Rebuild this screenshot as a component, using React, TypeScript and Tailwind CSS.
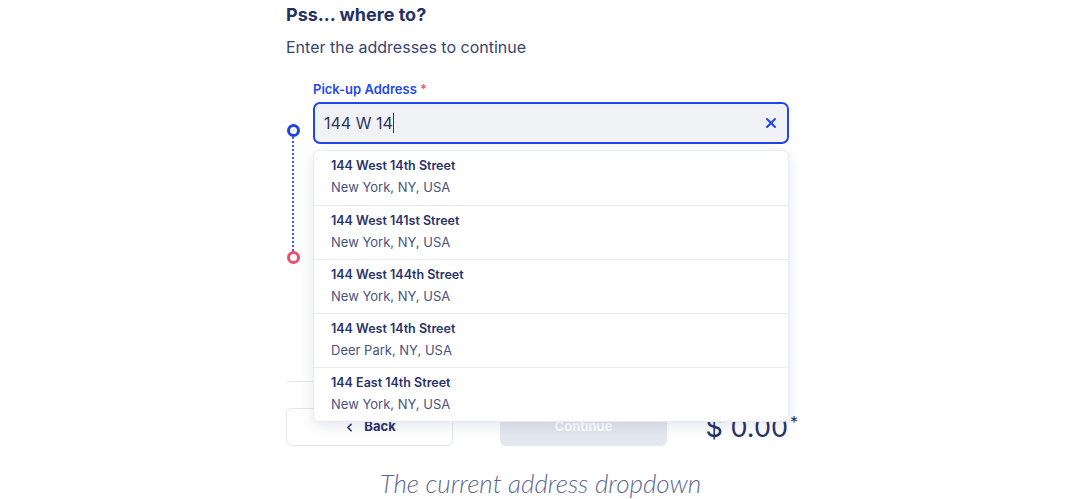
import { X, ChevronLeft } from "lucide-react"

const places = [
    { title: "144 West 14th Street", sub: "New York, NY, USA" },
    { title: "144 West 141st Street", sub: "New York, NY, USA" },
    { title: "144 West 144th Street", sub: "New York, NY, USA" },
    { title: "144 West 14th Street", sub: "Deer Park, NY, USA" },
    { title: "144 East 14th Street", sub: "New York, NY, USA" },
]

function Pin({ color }: { color: string }) {
    return (
        <div className={`w-[13px] h-[13px] rounded-full border-[3.5px] bg-white ${color}`} />
    )
}

export default function App() {
    return (
        <div className="w-[1081px] h-[499px] bg-white overflow-hidden font-['Inter',sans-serif] text-[#27326a]">
            <div className="ml-[286px] w-[503px] pt-[3px]">
                <h1 className="text-[18px] font-bold leading-[24px] text-[#253066]">Pss... where to?</h1>
                <p className="mt-[10px] text-[16px] leading-[20px] text-[#3a4470]">Enter the addresses to continue</p>

                <div className="mt-[24px] flex gap-[13px]">
                    {/* pins */}
                    <div className="w-[14px] flex flex-col items-center pt-[43px]">
                        <Pin color="border-[#1f40e6]" />
                        <div className="h-[114px] border-l-2 border-dotted border-[#3a5cf0]" />
                        <Pin color="border-[#e9506e]" />
                    </div>

                    <div className="flex-1">
                        <label className="block text-[13px] font-semibold leading-[16px] text-[#2447ea]">
                            Pick-up Address <span className="text-[#ef5b73]">*</span>
                        </label>
                        <div className="relative mt-[5px]">
                            <div className="h-[42px] rounded-[7px] border-2 border-[#1f45f0] bg-[#f1f2f5] flex items-center pl-[9px] pr-[8px]">
                                <span className="text-[16px] text-[#2e3763]">144 W 14</span>
                                <span className="w-px h-[20px] bg-[#2e3763]" />
                                <X className="ml-auto w-[16px] h-[16px] text-[#1f45f0]" strokeWidth={3} />
                            </div>

                            <div className="absolute z-10 left-0 right-0 top-[48px] bg-white rounded-[6px] border border-[#e7eaf2] shadow-[0_4px_14px_rgba(40,50,90,0.12)]">
                                {places.map((p, i) => (
                                    <div key={i} className={`h-[54px] pl-[17px] pt-[6px] ${i > 0 ? "border-t border-[#e9ecf3]" : ""}`}>
                                        <div className="text-[12.5px] font-semibold leading-[18px] text-[#29336a]">{p.title}</div>
                                        <div className="mt-[3px] text-[13px] leading-[18px] text-[#4a5380]">{p.sub}</div>
                                    </div>
                                ))}
                            </div>
                        </div>
                        <div className="h-[237px]" />
                    </div>
                </div>

                <div className="border-t border-[#e5e8ef]" />

                <div className="mt-[26px] h-[38px] flex items-center">
                    <button className="w-[167px] h-[38px] rounded-[6px] border border-[#e3e6ee] flex items-center justify-center gap-[8px] text-[13px] font-bold text-[#27326a]">
                        <ChevronLeft className="w-[13px] h-[13px]" strokeWidth={3} />
                        Back
                    </button>
                    <button className="ml-[47px] w-[167px] h-[38px] rounded-[6px] bg-[#e3e7ef] text-[13px] font-bold text-white">
                        Continue
                    </button>
                    <div className="ml-auto relative text-[27px] leading-[38px] text-[#27326a] pr-[1px] pt-[2px]">
                        $ 0.00
                        <span className="absolute -right-[9px] top-[-4px] text-[16px] text-[#27326a]">*</span>
                    </div>
                </div>
            </div>

            <p className="mt-[22px] text-center text-[26px] leading-[30px] italic font-light text-[#5d6992] font-['Lato',sans-serif]">
                The current address dropdown
            </p>
        </div>
    )
}
